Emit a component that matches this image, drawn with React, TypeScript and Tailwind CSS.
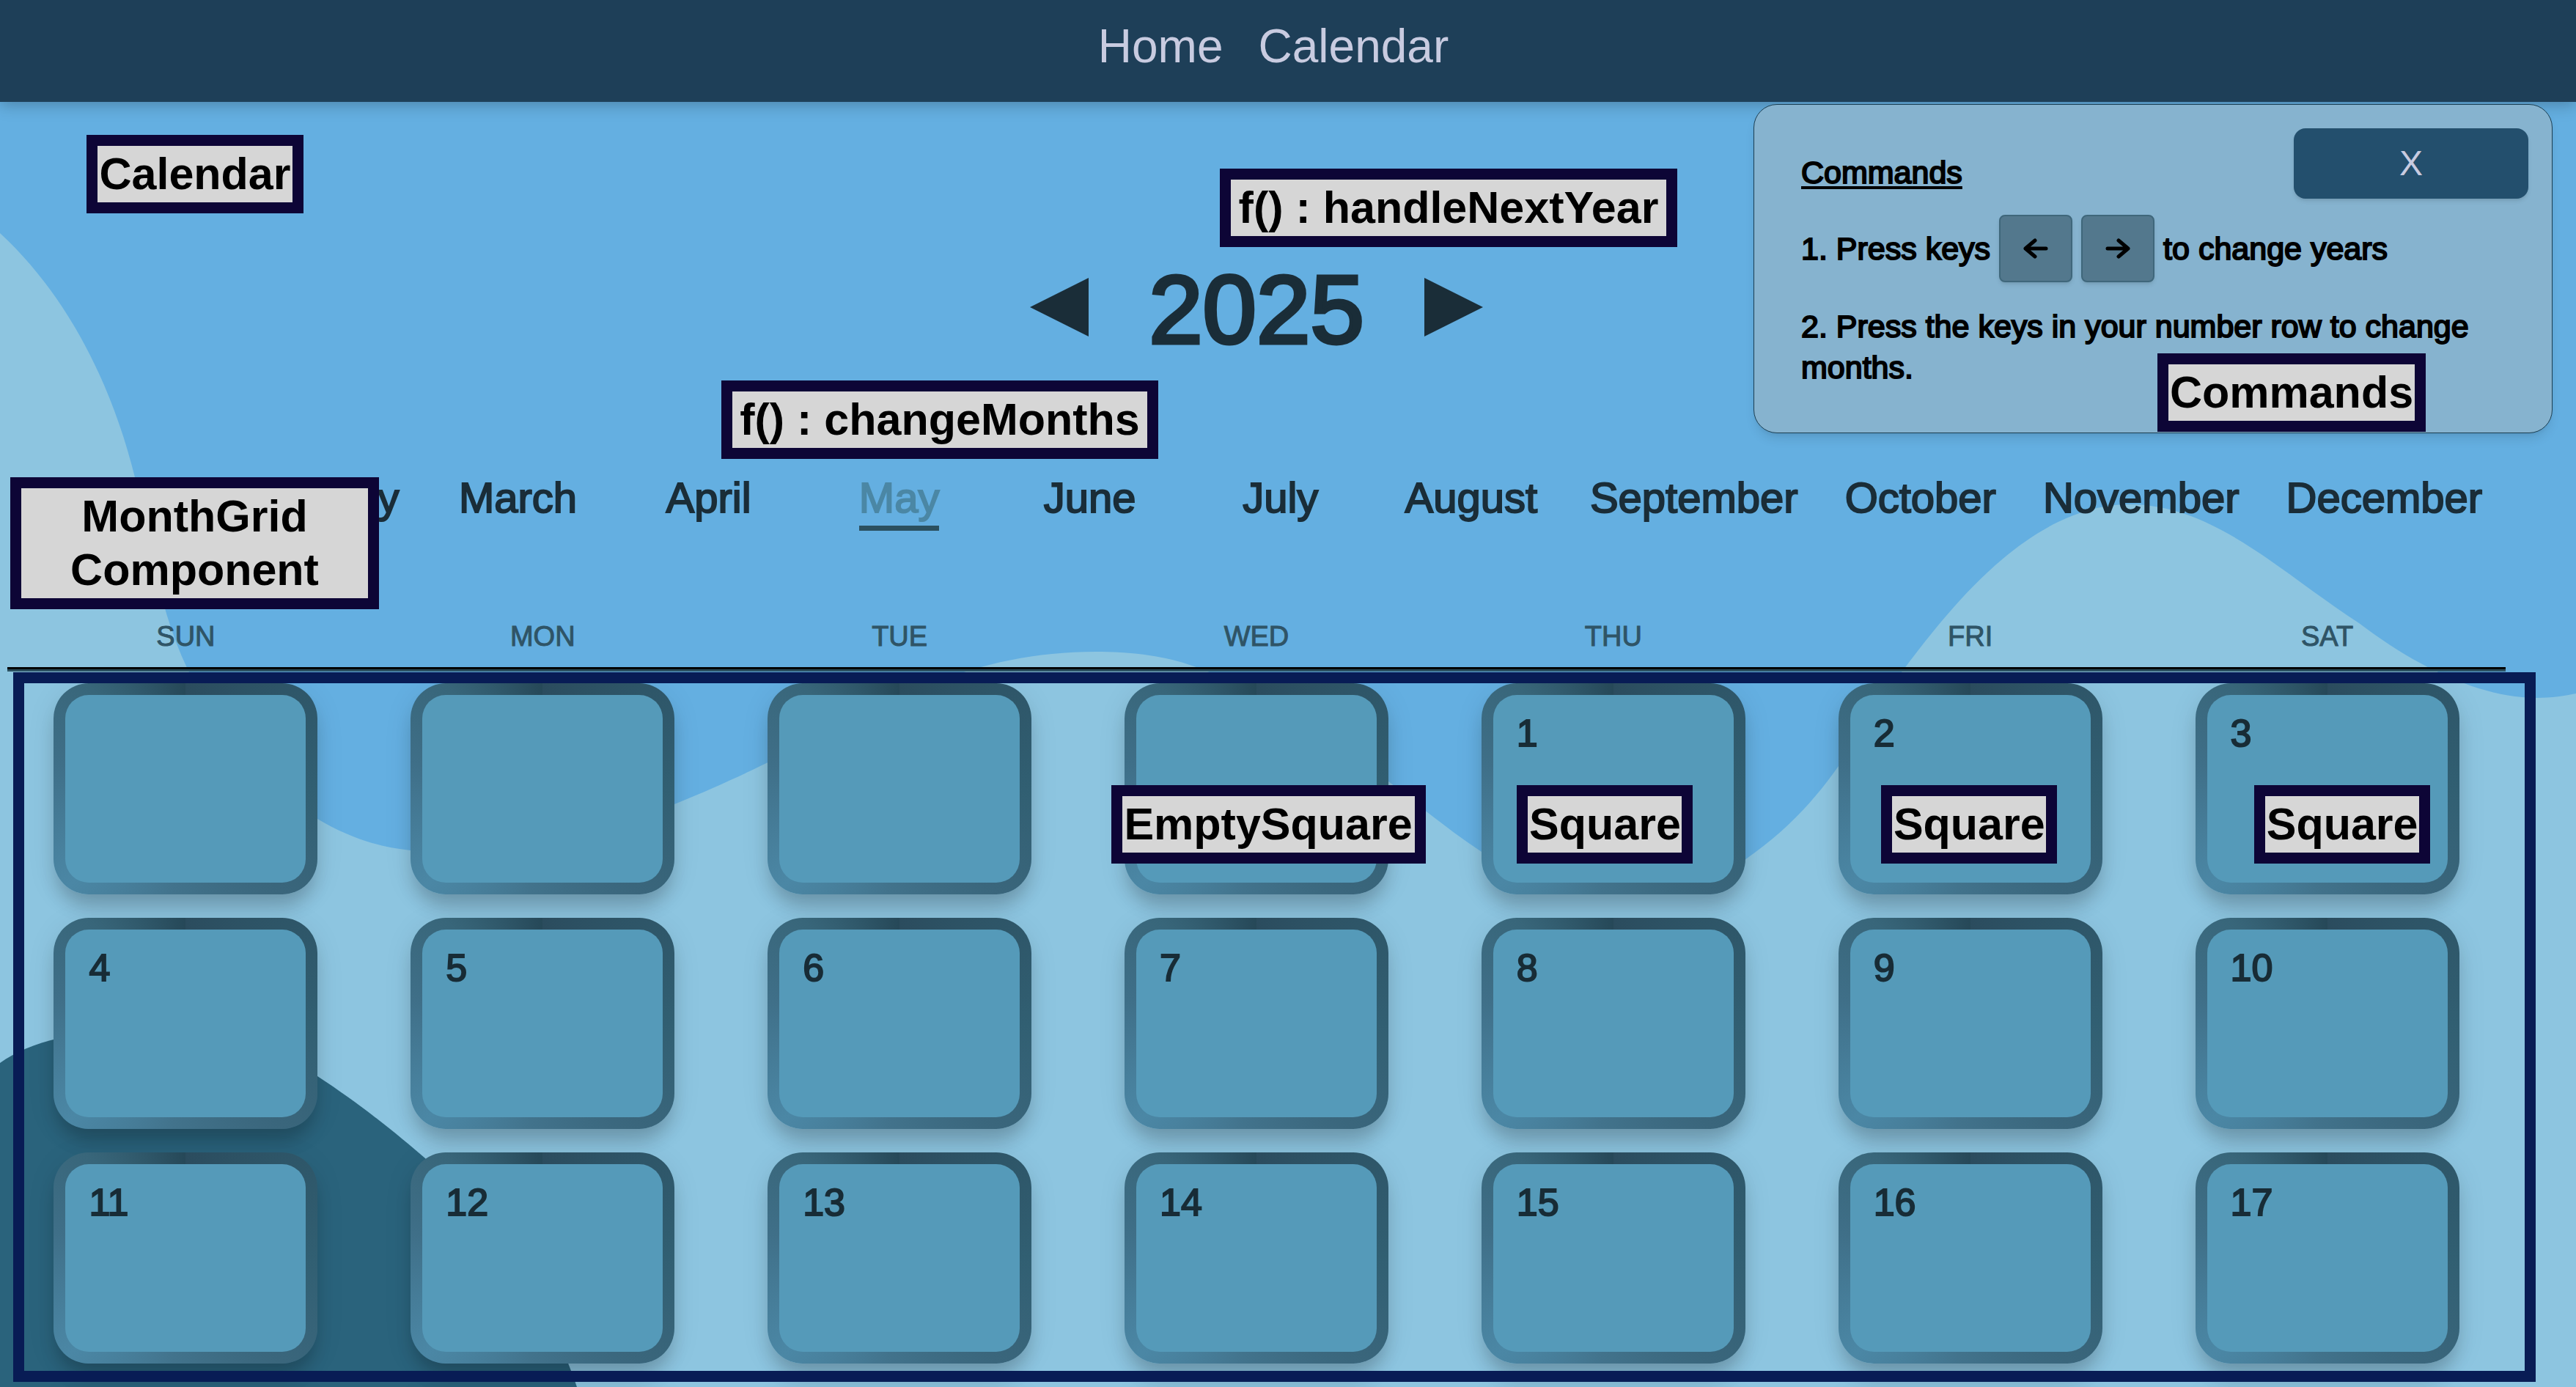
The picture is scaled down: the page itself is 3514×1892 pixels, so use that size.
import React from "react";

const MONTHS = ["January", "February", "March", "April", "May", "June", "July", "August", "September", "October", "November", "December"];
const WEEKDAYS = ["SUN", "MON", "TUE", "WED", "THU", "FRI", "SAT"];
const LEADING_BLANKS = 4;
const CELLS = Array.from({ length: 35 }, (_, i) => i - LEADING_BLANKS + 1);

function Tag({ place, children }: { place: string; children: React.ReactNode }) {
  return (
    <div
      className={`absolute z-30 flex items-center justify-center border-[15px] border-[#0d0536] bg-[#d6d6d6] text-center text-[61px] leading-[73px] font-bold whitespace-nowrap text-black [-webkit-text-stroke:0px] ${place}`}
    >
      {children}
    </div>
  );
}

function Waves() {
  return (
    <svg className="absolute inset-0 h-full w-full" viewBox="0 0 3514 1892" preserveAspectRatio="none" aria-hidden="true">
      <path
        fill="#8dc5e0"
        d="M0 318C96 407 154 530 184 651C206 740 216 832 258 917C310 1010 370 1070 433 1117C475 1142 517 1156 560 1160C680 1170 800 1150 920 1097C1060 1040 1140 990 1210 960C1300 915 1390 889 1495 889C1560 889 1605 898 1650 917C1750 960 1820 1010 1893 1065C1960 1118 2010 1160 2070 1190C2180 1230 2310 1225 2380 1173C2500 1090 2530 1000 2600 909C2660 830 2770 688 2905 688C3020 688 3110 780 3218 850C3290 905 3380 952 3460 952C3480 952 3500 949 3514 946V1892H0Z"
      />
      <path fill="#2a637c" d="M0 1450C90 1385 310 1390 433 1468C500 1512 545 1550 580 1580C660 1660 750 1780 787 1892H0Z" />
    </svg>
  );
}

function DayCell({ day, tag }: { day: number; tag?: React.ReactNode }) {
  return (
    <div className="relative flex justify-center">
      <div className="h-72 w-[360px] rounded-[48px] bg-[conic-gradient(#2b4c5e,#315f72_25%,#3a667c_38%,#42738c_52%,#4b87a5_64%,#3f6f88_78%,#38667a_88%,#264858)] p-4 shadow-[0_20px_25px_-5px_rgba(0,0,0,0.2),0_8px_40px_rgba(0,0,0,0.08)]">
        <div className="h-full rounded-[32px] bg-[#559ab9] px-8 pt-4 text-[52px] leading-[72px] text-[#182c36] [-webkit-text-stroke:2px]">
          {day > 0 ? day : null}
        </div>
      </div>
      {tag}
    </div>
  );
}

function tagFor(index: number) {
  if (index === 3) return <Tag place="top-[139px] left-[45px] w-[429px] h-[107px]">EmptySquare</Tag>;
  if (index === 4) return <Tag place="top-[139px] left-[112px] w-[240px] h-[107px]">Square</Tag>;
  if (index === 5) return <Tag place="top-[139px] left-[122px] w-[240px] h-[107px]">Square</Tag>;
  if (index === 6) return <Tag place="top-[139px] left-[144px] w-[240px] h-[107px]">Square</Tag>;
  return undefined;
}

function Key({ label, children }: { label: string; children: React.ReactNode }) {
  return (
    <kbd
      aria-label={label}
      className="flex h-[92px] w-[100px] items-center justify-center rounded-lg border-2 border-[#3f677b] bg-[#53788d] shadow-md"
    >
      {children}
    </kbd>
  );
}

function Arrow({ d }: { d: string }) {
  return (
    <svg viewBox="0 0 34 28" className="h-7 w-[34px]" fill="none" stroke="black" strokeWidth="5" strokeLinecap="round" strokeLinejoin="round">
      <path d={d} />
    </svg>
  );
}

function Commands() {
  return (
    <aside className="absolute top-[142px] right-8 z-20 h-[449px] w-[1090px] rounded-[32px] border border-[#1c3f52] bg-[#86b3cf] pt-16 pr-16 pl-16 text-[43px] leading-[56px] text-black shadow-lg [-webkit-text-stroke:2px]">
      <button className="absolute top-8 right-8 h-24 w-80 rounded-2xl bg-[#234f6d] text-[48px] text-[#c8cbe0] shadow-md [-webkit-text-stroke:0px]">X</button>
      <h2 className="underline decoration-4 underline-offset-4">Commands</h2>
      <p className="mt-[30px] flex items-center gap-3">
        1. Press keys
        <Key label="Left arrow">
          <Arrow d="M31 14H3M16 3L3 14L16 25" />
        </Key>
        <Key label="Right arrow">
          <Arrow d="M3 14H31M18 3L31 14L18 25" />
        </Key>
        to change years
      </p>
      <p className="mt-8">2. Press the keys in your number row to change months.</p>
      <Tag place="top-[339px] left-[550px] w-[366px] h-[107px]">Commands</Tag>
    </aside>
  );
}

export default function App() {
  return (
    <div className="relative h-screen overflow-hidden bg-[#64afe1] font-['Liberation_Sans',Arial,sans-serif]">
      <Waves />
      <header className="relative z-10 flex h-[139px] justify-center gap-12 bg-[#1e3f58] pr-10 pt-[23px] text-[64px] leading-[80px] text-[#c8cbe0] shadow-[0_4px_20px_rgba(0,0,0,0.25)]">
        <a href="#home">Home</a>
        <a href="#calendar">Calendar</a>
      </header>

      <Commands />
      <Tag place="top-[184px] left-[118px] w-[296px] h-[107px]">Calendar</Tag>
      <Tag place="top-[230px] left-[1664px] w-[624px] h-[107px]">f() : handleNextYear</Tag>
      <Tag place="top-[519px] left-[984px] w-[596px] h-[107px]">f() : changeMonths</Tag>
      <Tag place="top-[651px] left-[14px] w-[503px] h-[180px]">
        MonthGrid
        <br />
        Component
      </Tag>

      <main className="relative pr-24 pl-[10px] text-[#1a2d38]">
        <div className="flex h-[340px] items-end justify-center gap-20">
          <button aria-label="Previous year">
            <svg viewBox="0 0 80 80" className="mb-5 h-20 w-20" fill="#1a2d38">
              <path d="M80 0V80L0 40Z" />
            </svg>
          </button>
          <h1 className="w-[298px] text-center text-[132px] leading-[112px] [-webkit-text-stroke:5px]">2025</h1>
          <button aria-label="Next year">
            <svg viewBox="0 0 80 80" className="mb-5 h-20 w-20" fill="#1a2d38">
              <path d="M0 0V80L80 40Z" />
            </svg>
          </button>
        </div>
        <nav className="mt-[164px] flex text-[58px] leading-[72px] [-webkit-text-stroke:2px]">
          {MONTHS.map((m) => (
            <div key={m} className="flex flex-1 justify-center px-8">
              <button className={m === "May" ? "border-b-[7px] border-[#2b5060] pb-0.5 text-[#4b87a5]" : "border-b-[7px] border-transparent pb-0.5"}>{m}</button>
            </div>
          ))}
        </nav>
        <div className="mt-[120px] grid h-[66px] grid-cols-7 text-center text-[38px] leading-[48px] text-[#2f5466] [-webkit-text-stroke:1px]">
          {WEEKDAYS.map((d) => (
            <div key={d}>{d}</div>
          ))}
        </div>
        <div className="border-t-[3px] border-black">
          <div className="h-[3px] bg-[#2b5060]" />
        </div>
        <div className="mt-4 grid grid-cols-7 gap-y-8">
          {CELLS.map((day, i) => (
            <DayCell key={i} day={day} tag={tagFor(i)} />
          ))}
        </div>
      </main>
      <div className="pointer-events-none absolute top-[917px] right-[55px] bottom-[7px] left-[18px] z-20 border-[15px] border-[#081c55]" />
    </div>
  );
}
